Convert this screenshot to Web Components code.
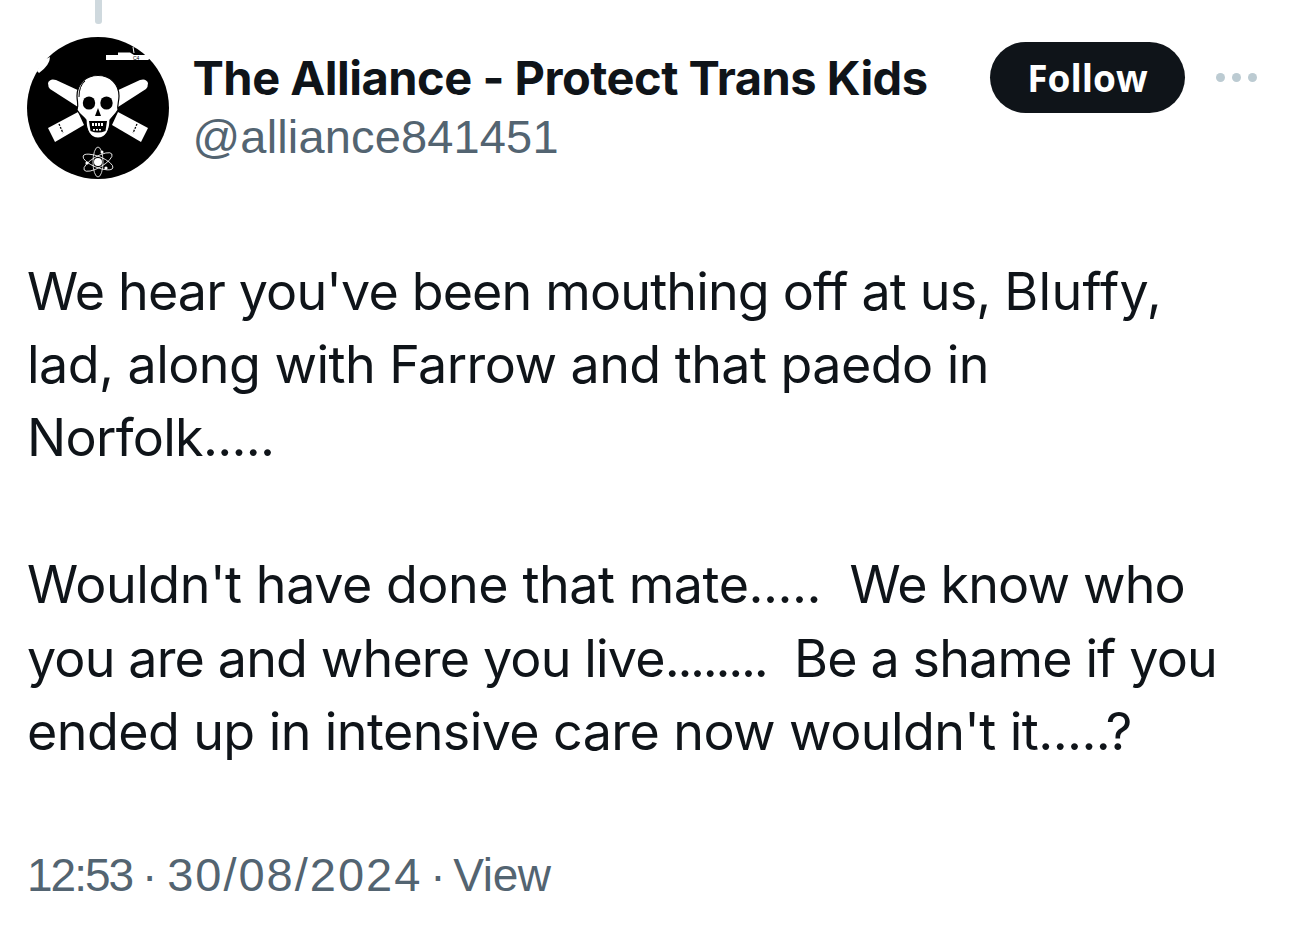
<!DOCTYPE html>
<html>
<head>
<meta charset="utf-8">
<style>
  html, body { margin: 0; background: #fff; }
</style>
</head>
<body>
<tweet-card>
  <tweet-header name="The Alliance - Protect Trans Kids" handle="@alliance841451"></tweet-header>
  <tweet-body>
    <p><span style="letter-spacing:-0.85px">We hear you've been mouthing off at us, <span style="letter-spacing:0.3px">Bluffy,</span></span><br><span style="letter-spacing:-0.55px">lad, along with Farrow and that paedo in</span><br>Norfolk.....</p>
    <p><span style="letter-spacing:-0.45px">Wouldn't have done that mate.....&nbsp; <span style="letter-spacing:-0.85px">We know who</span></span><br><span style="letter-spacing:-0.85px">you are and where you live<span style="letter-spacing:-2.25px">........</span>&nbsp; Be a shame if you</span><br><span style="letter-spacing:-0.58px">ended up in intensive care now wouldn't it.....?</span></p>
  </tweet-body>
  <tweet-meta time="12:53" date="30/08/2024" link="View"></tweet-meta>
</tweet-card>
<script>
class TweetCard extends HTMLElement {
  connectedCallback() {
    this.attachShadow({ mode: 'open' });
    this.shadowRoot.innerHTML = `
      <style>
        :host { display: block; width: 1290px; height: 934px; overflow: hidden; background: #fff;
          font-family: "Liberation Sans", Arial, sans-serif; }
        .thread { width: 7px; height: 24px; margin-left: 95px; background: #cfd9de; border-radius: 0 0 3px 3px; }
      </style>
      <div class="thread"></div>
      <slot></slot>
    `;
  }
}
class TweetHeader extends HTMLElement {
  connectedCallback() {
    this.attachShadow({ mode: 'open' });
    this.shadowRoot.innerHTML = `
      <style>
        :host { display: flex; align-items: flex-start; padding: 13px 33px 0 27px; }
        svg.avatar { width: 142px; height: 142px; flex: none; display: block; }
        .who { flex: 1; margin-left: 23.5px; padding-top: 13px; }
        .name { font-family: Inter, sans-serif; font-size: 47px; line-height: 56px; font-weight: 700; color: #0f1419; letter-spacing: -0.5px; white-space: nowrap; }
        .handle { font-size: 47px; line-height: 62px; color: #536471; letter-spacing: 0.15px; }
        .follow { flex: none; width: 195px; height: 71px; margin-top: 5px; border-radius: 36px; background: #0f1419;
          color: #fff; font-family: "Open Sans", sans-serif; font-size: 37px; font-weight: 700; display: flex; align-items: center; justify-content: center; }
        .more { flex: none; width: 41px; height: 10px; margin: 36px 0 0 31px; display: flex; justify-content: space-between; }
        .more i { width: 9px; height: 9px; border-radius: 50%; background: #bccbd2; }
      </style>
      <svg class="avatar" viewBox="27 37 142 142">
        <circle cx="98" cy="108" r="71" fill="#000"/>
        <path d="M37 71 Q41 60 50 57 Q50 65 39 73Z" fill="#fff"/>
        <path d="M106 55 H118 V52.5 H130 L134 55 H150 L152 57 L148 60 H106Z" fill="#fff"/>
        <path d="M133 47 L134 53 M139 49 L146 54" stroke="#fff" stroke-width="1" fill="none"/>
        <text x="133" y="60" font-size="5" font-family="Liberation Sans, sans-serif" fill="#000">C4</text>
        <g fill="#fff">
          <path d="M48 83 Q50 78 56 80 L82 92 L78 107 L50 89 Q48 87 48 83Z"/>
          <path d="M148 83 Q146 78 140 80 L114 92 L118 107 L146 89 Q148 87 148 83Z"/>
          <path d="M48 128 L78 112 L84 125 L55 142Z"/>
          <path d="M148 128 L118 112 L112 125 L141 142Z"/>
        </g>
        <g stroke="#000" stroke-width="1.3" fill="none" stroke-dasharray="2 1.2">
          <path d="M59 124 L63 133"/>
          <path d="M137 124 L133 133"/>
        </g>
        <path fill="#fff" stroke="#000" stroke-width="1.2" d="M98 75.5 C111 75.5 119 85 119 96 C119 102 117 105 118 110 C115 115 112 117 110 120 C110 130 106 138 98 138 C90 138 86 130 86 120 C84 117 80 115 77 110 C79 105 77 102 77 96 C77 85 85 75.5 98 75.5Z"/>
        <path d="M85 81 Q79 86 79 97" stroke="#000" stroke-width="1" fill="none"/>
        <ellipse cx="89" cy="103" rx="6.2" ry="6.6" fill="#000"/>
        <ellipse cx="106.5" cy="103" rx="6.2" ry="6.6" fill="#000"/>
        <path d="M98 108 L95 116 H101Z" fill="#000"/>
        <path d="M89 121 H107 L105.5 131 Q98 134 90.5 131Z" fill="#000"/>
        <g fill="#fff">
          <rect x="92" y="123" width="2" height="3"/><rect x="95" y="123" width="2" height="3"/><rect x="98" y="123" width="2" height="3"/><rect x="101" y="123" width="2" height="3"/>
          <rect x="93" y="129" width="2" height="1.6"/><rect x="96" y="129" width="2" height="1.6"/><rect x="99" y="129" width="2" height="1.6"/>
        </g>
        <g fill="none" stroke="#fff" stroke-width=".8">
          <ellipse cx="98" cy="162" rx="16" ry="5.5" transform="rotate(22 98 162)"/>
          <ellipse cx="98" cy="162" rx="16" ry="5.5" transform="rotate(-30 98 162)"/>
          <ellipse cx="98" cy="162" rx="5" ry="15"/>
        </g>
        <circle cx="98" cy="162" r="4" fill="#fff"/>
        <circle cx="87" cy="163" r="1.6" fill="#fff"/><circle cx="102" cy="152" r="1.5" fill="#fff"/><circle cx="106" cy="168" r="1.6" fill="#fff"/>
      </svg>
      <div class="who">
        <div class="name">${this.getAttribute('name')}</div>
        <div class="handle">${this.getAttribute('handle')}</div>
      </div>
      <div class="follow">Follow</div>
      <div class="more"><i></i><i></i><i></i></div>
    `;
  }
}
class TweetBody extends HTMLElement {
  connectedCallback() {
    this.attachShadow({ mode: 'open' });
    this.shadowRoot.innerHTML = `
      <style>
        :host { display: block; padding: 75.5px 0 0 27px; font-family: Inter, sans-serif; font-size: 52px; line-height: 73.4px; color: #0f1419; letter-spacing: -0.7px; white-space: nowrap; font-variant-ligatures: none; }
        ::slotted(p) { margin: 0 0 73.4px; }
      </style>
      <slot></slot>
    `;
  }
}
class TweetMeta extends HTMLElement {
  connectedCallback() {
    this.attachShadow({ mode: 'open' });
    this.shadowRoot.innerHTML = `
      <style>
        :host { display: flex; padding: 3px 0 0 27px; font-size: 46px; line-height: 60px; color: #536471; }
        .time { letter-spacing: -2px; }
        .date { font-size: 47px; letter-spacing: 2px; }
        .sep { width: 35px; text-align: center; }
        .sep + .date + .sep { width: 31px; }
        .link { letter-spacing: -0.4px; }
      </style>
      <span class="time">${this.getAttribute('time')}</span>
      <span class="sep">·</span>
      <span class="date">${this.getAttribute('date')}</span>
      <span class="sep">·</span>
      <span class="link">${this.getAttribute('link')}</span>
    `;
  }
}
customElements.define('tweet-card', TweetCard);
customElements.define('tweet-header', TweetHeader);
customElements.define('tweet-body', TweetBody);
customElements.define('tweet-meta', TweetMeta);
</script>
</body>
</html>
